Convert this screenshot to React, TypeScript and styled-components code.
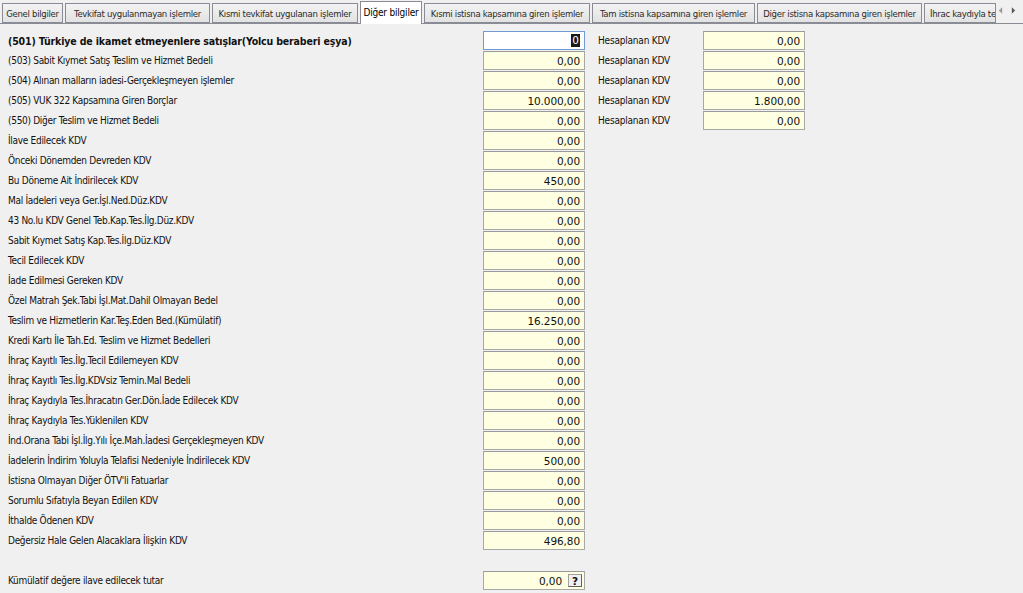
import React from "react"
import styled, { createGlobalStyle } from "styled-components"

const GlobalStyle = createGlobalStyle`
  html, body {
    margin: 0;
    padding: 0;
    background: #f0f0f0;
  }
  body {
    font-family: Tahoma, "DejaVu Sans Condensed", "Liberation Sans", sans-serif;
    font-size: 10px;
    color: #000;
  }
`

type Row = { label: string; value: string; kdv?: string; focused?: boolean; bold?: boolean }

const rows: Row[] = [
  { label: "(501) Türkiye de ikamet etmeyenlere satışlar(Yolcu beraberi eşya)", value: "0", kdv: "0,00", focused: true, bold: true },
  { label: "(503) Sabit Kıymet Satış Teslim ve Hizmet Bedeli", value: "0,00", kdv: "0,00" },
  { label: "(504) Alınan malların iadesi-Gerçekleşmeyen işlemler", value: "0,00", kdv: "0,00" },
  { label: "(505) VUK 322 Kapsamına Giren Borçlar", value: "10.000,00", kdv: "1.800,00" },
  { label: "(550) Diğer Teslim ve Hizmet Bedeli", value: "0,00", kdv: "0,00" },
  { label: "İlave Edilecek KDV", value: "0,00" },
  { label: "Önceki Dönemden Devreden KDV", value: "0,00" },
  { label: "Bu Döneme Ait İndirilecek KDV", value: "450,00" },
  { label: "Mal İadeleri veya Ger.İşl.Ned.Düz.KDV", value: "0,00" },
  { label: "43 No.lu KDV Genel Teb.Kap.Tes.İlg.Düz.KDV", value: "0,00" },
  { label: "Sabit Kıymet Satış Kap.Tes.İlg.Düz.KDV", value: "0,00" },
  { label: "Tecil Edilecek KDV", value: "0,00" },
  { label: "İade Edilmesi Gereken KDV", value: "0,00" },
  { label: "Özel Matrah Şek.Tabi İşl.Mat.Dahil Olmayan Bedel", value: "0,00" },
  { label: "Teslim ve Hizmetlerin Kar.Teş.Eden Bed.(Kümülatif)", value: "16.250,00" },
  { label: "Kredi Kartı İle Tah.Ed. Teslim ve Hizmet Bedelleri", value: "0,00" },
  { label: "İhraç Kayıtlı Tes.İlg.Tecil Edilemeyen KDV", value: "0,00" },
  { label: "İhraç Kayıtlı Tes.İlg.KDVsiz Temin.Mal Bedeli", value: "0,00" },
  { label: "İhraç Kaydıyla Tes.İhracatın Ger.Dön.İade Edilecek KDV", value: "0,00" },
  { label: "İhraç Kaydıyla Tes.Yüklenilen KDV", value: "0,00" },
  { label: "İnd.Orana Tabi İşl.İlg.Yılı İçe.Mah.İadesi Gerçekleşmeyen KDV", value: "0,00" },
  { label: "İadelerin İndirim Yoluyla Telafisi Nedeniyle İndirilecek KDV", value: "500,00" },
  { label: "İstisna Olmayan Diğer ÖTV'li Fatuarlar", value: "0,00" },
  { label: "Sorumlu Sıfatıyla Beyan Edilen KDV", value: "0,00" },
  { label: "İthalde Ödenen KDV", value: "0,00" },
  { label: "Değersiz Hale Gelen Alacaklara İlişkin KDV", value: "496,80" },
]

const tabs = [
  { title: "Genel bilgiler", width: 61 },
  { title: "Tevkifat uygulanmayan işlemler", width: 145 },
  { title: "Kısmi tevkifat uygulanan işlemler", width: 146 },
  { title: "Diğer bilgiler", width: 62, active: true },
  { title: "Kısmi istisna kapsamına giren işlemler", width: 166 },
  { title: "Tam istisna kapsamına giren işlemler", width: 163 },
  { title: "Diğer istisna kapsamına giren işlemler", width: 165 },
  { title: "İhrac kaydıyla teslimler", width: 72, clipped: true },
]

export default function App() {
  return (
    <S.Page>
      <GlobalStyle />
      <S.TabBar>
        {tabs.map((t) => (
          <S.Tab key={t.title} $width={t.width} $active={!!t.active} $clipped={!!t.clipped}>
            {t.title}
          </S.Tab>
        ))}
        <S.Arrows>
          <S.Arrow viewBox="0 0 6 8">
            <path d="M5 0 L1 4 L5 8 Z" fill="#9a9a9a" />
          </S.Arrow>
          <S.Arrow viewBox="0 0 6 8">
            <path d="M1 0 L5 4 L1 8 Z" fill="#5a5a5a" />
          </S.Arrow>
        </S.Arrows>
      </S.TabBar>
      <S.Content>
        {rows.map((r) => (
          <S.Row key={r.label}>
            <S.Label $bold={!!r.bold}>{r.label}</S.Label>
            {r.focused ? (
              <S.FocusBox>
                <S.Caret>{r.value}</S.Caret>
              </S.FocusBox>
            ) : (
              <S.Box>{r.value}</S.Box>
            )}
            {r.kdv && (
              <>
                <S.SideLabel>Hesaplanan KDV</S.SideLabel>
                <S.Box>{r.kdv}</S.Box>
              </>
            )}
          </S.Row>
        ))}
        <S.Spacer />
        <S.Row>
          <S.Label $bold={false}>Kümülatif değere ilave edilecek tutar</S.Label>
          <S.Box>
            0,00
            <S.HelpButton>?</S.HelpButton>
          </S.Box>
        </S.Row>
      </S.Content>
    </S.Page>
  )
}

const S = {
  Page: styled.div`
    width: 1023px;
    height: 593px;
    overflow: hidden;
    background: #f0f0f0;
    font-family: Tahoma, "DejaVu Sans Condensed", "Liberation Sans", sans-serif;
    font-size: 10px;
  `,
  TabBar: styled.div`
    display: flex;
    align-items: flex-end;
    height: 24px;
    padding-left: 2px;
    gap: 2px;
    border-bottom: 1px solid #898c95;
    box-sizing: border-box;
  `,
  Tab: styled.div<{ $width: number; $active: boolean; $clipped: boolean }>`
    flex: 0 0 auto;
    width: ${(p) => p.$width}px;
    height: ${(p) => (p.$active ? 23 : 20)}px;
    margin-bottom: ${(p) => (p.$active ? -1 : 0)}px;
    box-sizing: border-box;
    border: 1px solid #898c95;
    border-bottom: ${(p) => (p.$active ? "none" : "1px solid #898c95")};
    background: ${(p) => (p.$active ? "#ffffff" : "linear-gradient(#f3f3f3, #e2e2e2)")};
    color: ${(p) => (p.$active ? "#000" : "#2a2a2a")};
    display: flex;
    align-items: center;
    justify-content: ${(p) => (p.$clipped ? "flex-start" : "center")};
    padding-left: ${(p) => (p.$clipped ? 5 : 0)}px;
    white-space: nowrap;
    overflow: hidden;
    font-size: ${(p) => (p.$active ? 10 : 9.5)}px;
    letter-spacing: ${(p) => (p.$active ? "-0.2px" : "-0.3px")};
    padding-bottom: ${(p) => (p.$active ? 2 : 0)}px;
  `,
  Arrows: styled.div`
    flex: 1;
    display: flex;
    justify-content: flex-end;
    align-items: center;
    gap: 8px;
    height: 20px;
    padding-right: 7px;
    align-self: flex-start;
  `,
  Arrow: styled.svg`
    width: 5px;
    height: 7px;
  `,
  Content: styled.div`
    padding: 7px 0 0 8px;
    display: flex;
    flex-direction: column;
    gap: 1px;
  `,
  Row: styled.div`
    display: flex;
    align-items: center;
    height: 19px;
  `,
  Label: styled.div<{ $bold: boolean }>`
    width: 475px;
    flex: 0 0 auto;
    white-space: nowrap;
    font-weight: ${(p) => (p.$bold ? "bold" : "normal")};
    font-size: ${(p) => (p.$bold ? 10.5 : 10)}px;
    letter-spacing: ${(p) => (p.$bold ? "-0.15px" : "-0.3px")};
    color: #111;
  `,
  Box: styled.div`
    width: 102px;
    height: 19px;
    flex: 0 0 auto;
    box-sizing: border-box;
    border: 1px solid #a8a8a8;
    border-top-color: #9a9a9a;
    background: #ffffe1;
    display: flex;
    align-items: center;
    justify-content: flex-end;
    padding-right: 4px;
    font-family: "DejaVu Sans", Tahoma, sans-serif;
    font-size: 10.5px;
    letter-spacing: -0.1px;
    color: #111;
  `,
  FocusBox: styled.div`
    width: 102px;
    height: 19px;
    flex: 0 0 auto;
    box-sizing: border-box;
    border: 1px solid #6f9ad3;
    background: #ffffff;
    display: flex;
    align-items: center;
    justify-content: flex-end;
    padding-right: 4px;
  `,
  Caret: styled.span`
    background: #1a1a1a;
    color: #fff;
    font-family: "DejaVu Sans", Tahoma, sans-serif;
    font-size: 10.5px;
    line-height: 13px;
    padding: 0 1px;
  `,
  SideLabel: styled.div`
    width: 105px;
    margin-left: 13px;
    flex: 0 0 auto;
    white-space: nowrap;
    font-size: 10px;
    letter-spacing: -0.2px;
    color: #111;
  `,
  HelpButton: styled.span`
    display: inline-flex;
    align-items: center;
    justify-content: center;
    width: 14px;
    height: 13px;
    margin-left: 6px;
    margin-right: -2px;
    box-sizing: border-box;
    border: 1px solid #a0a0a0;
    border-right-color: #606060;
    border-bottom-color: #606060;
    background: #f0f0f0;
    font-weight: bold;
    font-size: 10.5px;
  `,
  Spacer: styled.div`
    height: 19px;
  `,
}
